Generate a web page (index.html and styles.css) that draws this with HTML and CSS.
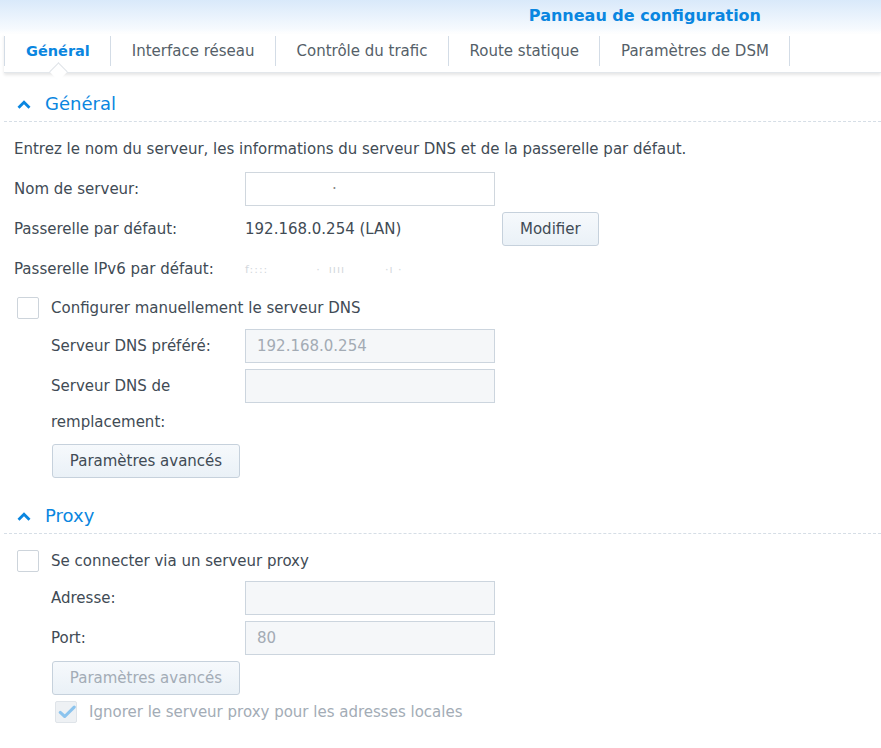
FILE: index.html
```html
<!DOCTYPE html>
<html lang="fr">
<head>
<meta charset="utf-8">
<title>Panneau de configuration</title>
<link rel="stylesheet" href="styles.css">
</head>
<body>
<div class="window">
  <div class="titlebar"><span class="title">Panneau de configuration</span></div>
  <div class="tabs">
    <div class="tab active">Général</div>
    <div class="tab">Interface réseau</div>
    <div class="tab">Contrôle du trafic</div>
    <div class="tab">Route statique</div>
    <div class="tab last">Paramètres de DSM</div>
  </div>

  <div class="section">
    <div class="section-head">
      <svg class="chev" width="14" height="9" viewBox="0 0 14 9"><path d="M1.5 7.8 L7 2.2 L12.5 7.8" fill="none" stroke="#0a86e0" stroke-width="2.8"/></svg>
      <span>Général</span>
    </div>
    <div class="body">
      <p class="desc">Entrez le nom du serveur, les informations du serveur DNS et de la passerelle par défaut.</p>
      <div class="row first">
        <label class="lbl">Nom de serveur:</label>
        <div class="input white"><span class="dot">·</span></div>
      </div>
      <div class="row">
        <label class="lbl">Passerelle par défaut:</label>
        <span class="value">192.168.0.254 (LAN)</span>
        <button class="btn">Modifier</button>
      </div>
      <div class="row">
        <label class="lbl">Passerelle IPv6 par défaut:</label>
        <span class="value blur"><span class="g1">f::::</span><span class="g2">·</span><span class="g3">ıııı</span><span class="g4">·ı ·</span></span>
      </div>
      <div class="check-row dns">
        <span class="cb"></span>
        <span class="cb-label">Configurer manuellement le serveur DNS</span>
      </div>
      <div class="sub">
        <div class="row sub-first">
          <label class="lbl sublbl">Serveur DNS préféré:</label>
          <div class="input"><span class="ph">192.168.0.254</span></div>
        </div>
        <div class="row tall">
          <label class="lbl sublbl wrap">Serveur DNS de remplacement:</label>
          <div class="input"></div>
        </div>
        <button class="btn wide adv1">Paramètres avancés</button>
      </div>
    </div>
  </div>

  <div class="section proxy">
    <div class="section-head">
      <svg class="chev" width="14" height="9" viewBox="0 0 14 9"><path d="M1.5 7.8 L7 2.2 L12.5 7.8" fill="none" stroke="#0a86e0" stroke-width="2.8"/></svg>
      <span>Proxy</span>
    </div>
    <div class="body">
      <div class="check-row proxy-check">
        <span class="cb"></span>
        <span class="cb-label">Se connecter via un serveur proxy</span>
      </div>
      <div class="sub">
        <div class="row sub-first2">
          <label class="lbl sublbl">Adresse:</label>
          <div class="input"></div>
        </div>
        <div class="row">
          <label class="lbl sublbl">Port:</label>
          <div class="input"><span class="ph">80</span></div>
        </div>
        <button class="btn wide disabled adv2">Paramètres avancés</button>
        <div class="check-row local">
          <span class="cb checked">
            <svg width="20" height="16" viewBox="0 0 20 16"><path d="M2.5 8.5 L7.5 13 L18 2.5" fill="none" stroke="#8cc4ee" stroke-width="3.4" stroke-linecap="round" stroke-linejoin="round"/></svg>
          </span>
          <span class="cb-label dis">Ignorer le serveur proxy pour les adresses locales</span>
        </div>
      </div>
    </div>
  </div>
</div>
</body>
</html>
```

FILE: styles.css
```css
* { box-sizing: border-box; }
html, body { margin: 0; padding: 0; background: #fff; }
body {
  font-family: "DejaVu Sans", Verdana, sans-serif;
  font-size: 15px;
  color: #414b55;
  width: 881px;
  height: 748px;
  overflow: hidden;
}

.titlebar {
  height: 34px;
  background: linear-gradient(#d9e9fa, #f6fafe 85%, #ffffff);
  display: flex;
  justify-content: flex-end;
  align-items: center;
  padding-right: 120px;
}
.title {
  color: #0a86e0;
  font-weight: bold;
  font-size: 16px;
  margin-top: -4px;
}

.tabs {
  margin-left: 4px;
  height: 39px;
  display: flex;
  align-items: flex-start;
  padding-top: 2px;
  background: #fff;
  border-bottom: 1px solid #e3e7eb;
  box-shadow: 0 2px 3px rgba(0, 0, 0, 0.10);
  position: relative;
  z-index: 1;
}
.tab {
  height: 30px;
  line-height: 30px;
  padding: 0 20px 0 21px;
  border-left: 1px solid #d3dce6;
  color: #555f69;
  position: relative;
  white-space: nowrap;
}
.tab.last { border-right: 1px solid #d3dce6; }
.tab.active {
  color: #0a86e0;
  font-weight: bold;
  font-size: 14.5px;
}
.tab.active::after {
  content: "";
  position: absolute;
  left: 47px;
  bottom: -12px;
  width: 12px;
  height: 12px;
  background: #fff;
  border-top: 1px solid #dfe3e8;
  border-left: 1px solid #dfe3e8;
  transform: rotate(45deg);
}

.section { margin-left: 4px; }
.section-head {
  margin-top: 19px;
  padding: 0 0 5px 13px;
  height: 30px;
  display: flex;
  align-items: center;
  gap: 14px;
  color: #0a86e0;
  font-size: 18px;
  line-height: 24px;
  border-bottom: 1px dashed #d6dee6;
}
.section.proxy .section-head { margin-top: 26px; }
.chev { display: block; margin-top: 1px; }

.body { padding-left: 10px; }
.desc {
  margin: 17px 0 0;
  line-height: 20px;
}

.row {
  display: flex;
  align-items: center;
  height: 34px;
  margin-top: 6px;
}
.row.first { margin-top: 13px; }
.lbl {
  width: 231px;
  flex: none;
}
.sublbl { width: 194px; }
.value { width: 257px; flex: none; }
.blur { color: #d3d8dd; font-size: 11px; letter-spacing: 1px; white-space: pre; }
.blur .g2 { margin-left: 48px; }
.blur .g3 { margin-left: 8px; }
.blur .g4 { margin-left: 40px; }

.input {
  width: 250px;
  height: 34px;
  border: 1px solid #ccd5de;
  background: #f5f7f9;
  padding: 0 11px;
  line-height: 32px;
  flex: none;
}
.input.white { background: #fff; border-color: #d0d7de; }
.dot { display: inline-block; margin-left: 75px; color: #888; }
.ph { color: #a3abb4; }

.btn {
  font-family: inherit;
  font-size: 15px;
  color: #414b55;
  height: 34px;
  padding: 0 17px;
  background: linear-gradient(#f6f9fc, #eaf1f7);
  border: 1px solid #c6d1dc;
  border-radius: 3px;
}
.btn.wide { width: 188px; padding: 0; display: block; }
.btn.disabled { color: #a3acb6; }

.check-row {
  display: flex;
  align-items: center;
  height: 22px;
}
.check-row.dns { margin-top: 11px; margin-left: 3px; }
.check-row.proxy-check { margin-top: 16px; margin-left: 3px; }
.cb {
  width: 22px;
  height: 22px;
  border: 1px solid #cdd4db;
  border-radius: 2px;
  background: #fff;
  flex: none;
  display: flex;
  align-items: center;
  justify-content: center;
}
.cb-label { margin-left: 12px; }
.cb.checked { background: #eef1f4; border-color: #dfe4e9; }
.cb.checked svg { margin-left: 2px; margin-top: -1px; }
.cb-label.dis { color: #a3acb6; }

.sub { padding-left: 37px; }
.row.sub-first { margin-top: 10px; }
.row.sub-first2 { margin-top: 9px; }
.row.tall {
  height: 72px;
  align-items: flex-start;
}
.wrap { line-height: 36px; margin-top: -1px; }
.adv1 { margin-top: 3px; margin-left: 1px; }
.adv2 { margin-top: 6px; margin-left: 1px; }
.check-row.local { margin-top: 6px; margin-left: 4px; }
```
